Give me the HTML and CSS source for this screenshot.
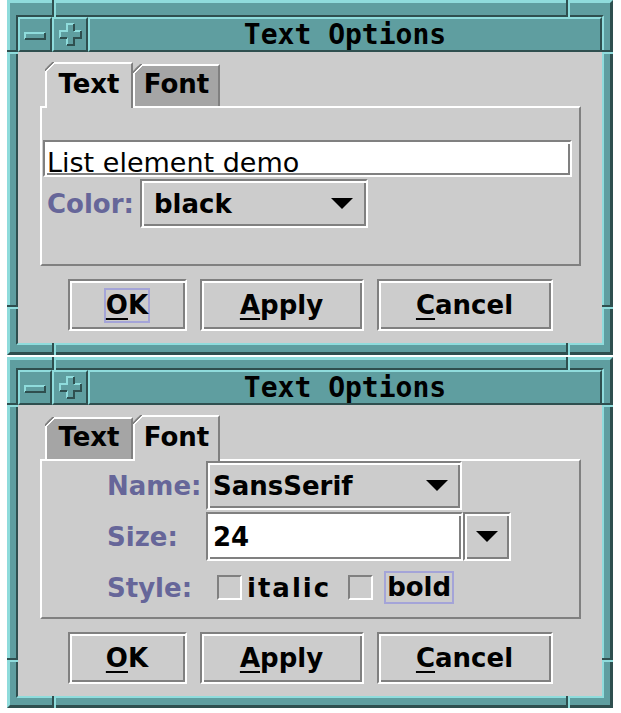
FILE: index.html
```html
<!DOCTYPE html>
<html>
<head>
<meta charset="utf-8">
<title>Text Options</title>
<link rel="stylesheet" href="styles.css">
</head>
<body>
<div class="window win1">
  <span class="tick tick-top tick-x1"></span>
  <span class="tick tick-top tick-x2"></span>
  <span class="tick tick-bottom tick-x1"></span>
  <span class="tick tick-bottom tick-x2"></span>
  <span class="tick tick-left tick-y1"></span>
  <span class="tick tick-left tick-y2"></span>
  <span class="tick tick-right tick-y1"></span>
  <span class="tick tick-right tick-y2"></span>
  <div class="inner">
    <div class="titlebar">
      <div class="tb tb-menu">
        <svg class="ic-minus" width="22" height="8" viewBox="0 0 22 8"><rect x="1" y="1" width="20" height="6" fill="#5f9ea0"/><path d="M1 7V1H21" stroke="#8fdcdc" stroke-width="2" fill="none"/><path d="M21 1V7H1" stroke="#2f4f4f" stroke-width="2" fill="none"/></svg>
      </div>
      <div class="tb tb-plus">
        <svg width="23" height="23" viewBox="-1 -1 23 23"><polygon points="7,0 14,0 14,7 21,7 21,14 14,14 14,21 7,21 7,14 0,14 0,7 7,7" fill="#5f9ea0"/><path d="M7 21V14M0 14V7H7V0H14M14 7H21" stroke="#8fdcdc" stroke-width="2" fill="none"/><path d="M14 0V7M21 7V14H14V21H7M7 14H0" stroke="#2f4f4f" stroke-width="2" fill="none"/></svg>
      </div>
      <div class="tb tb-title">Text Options</div>
    </div>
    <div class="client">
      <div class="tabs">
        <div class="tab active">Text</div>
        <div class="tab">Font</div>
      </div>
      <div class="panel panel-text">
        <div class="textfield"><span>List element demo</span></div>
        <div class="row-color">
          <span class="lbl">Color:</span>
          <div class="combo combo-color">
            <span>black</span>
            <svg class="arrow" width="22" height="11" viewBox="0 0 22 11"><polygon points="0,0 22,0 11,11" fill="#000"/></svg>
          </div>
        </div>
      </div>
      <div class="buttons">
        <div class="btn btn-ok"><span class="focus"><span class="mn">O</span>K</span></div>
        <div class="btn btn-apply"><span class="nofocus"><span class="mn">A</span>pply</span></div>
        <div class="btn btn-cancel"><span class="nofocus"><span class="mn">C</span>ancel</span></div>
      </div>
    </div>
  </div>
</div>

<div class="window win2">
  <span class="tick tick-top tick-x1"></span>
  <span class="tick tick-top tick-x2"></span>
  <span class="tick tick-bottom tick-x1"></span>
  <span class="tick tick-bottom tick-x2"></span>
  <span class="tick tick-left tick-y1"></span>
  <span class="tick tick-left tick-y2"></span>
  <span class="tick tick-right tick-y1"></span>
  <span class="tick tick-right tick-y2"></span>
  <div class="inner">
    <div class="titlebar">
      <div class="tb tb-menu">
        <svg class="ic-minus" width="22" height="8" viewBox="0 0 22 8"><rect x="1" y="1" width="20" height="6" fill="#5f9ea0"/><path d="M1 7V1H21" stroke="#8fdcdc" stroke-width="2" fill="none"/><path d="M21 1V7H1" stroke="#2f4f4f" stroke-width="2" fill="none"/></svg>
      </div>
      <div class="tb tb-plus">
        <svg width="23" height="23" viewBox="-1 -1 23 23"><polygon points="7,0 14,0 14,7 21,7 21,14 14,14 14,21 7,21 7,14 0,14 0,7 7,7" fill="#5f9ea0"/><path d="M7 21V14M0 14V7H7V0H14M14 7H21" stroke="#8fdcdc" stroke-width="2" fill="none"/><path d="M14 0V7M21 7V14H14V21H7M7 14H0" stroke="#2f4f4f" stroke-width="2" fill="none"/></svg>
      </div>
      <div class="tb tb-title">Text Options</div>
    </div>
    <div class="client">
      <div class="tabs">
        <div class="tab">Text</div>
        <div class="tab active">Font</div>
      </div>
      <div class="panel panel-font">
        <div class="fontgrid">
          <span class="lbl glbl">Name:</span>
          <div class="combo combo-name">
            <span>SansSerif</span>
            <svg class="arrow" width="22" height="11" viewBox="0 0 22 11"><polygon points="0,0 22,0 11,11" fill="#000"/></svg>
          </div>
          <span class="lbl glbl">Size:</span>
          <div class="sizecombo">
            <div class="sizefield">24</div>
            <div class="sizebtn"><svg class="arrow" width="22" height="11" viewBox="0 0 22 11"><polygon points="0,0 22,0 11,11" fill="#000"/></svg></div>
          </div>
          <span class="lbl glbl r3">Style:</span>
          <div class="stylerow r3">
            <span class="cb"></span>
            <span class="opt opt-italic">italic</span>
            <span class="cb cb2"></span>
            <span class="opt opt-bold">bold</span>
          </div>
        </div>
      </div>
      <div class="buttons">
        <div class="btn btn-ok"><span class="nofocus"><span class="mn">O</span>K</span></div>
        <div class="btn btn-apply"><span class="nofocus"><span class="mn">A</span>pply</span></div>
        <div class="btn btn-cancel"><span class="nofocus"><span class="mn">C</span>ancel</span></div>
      </div>
    </div>
  </div>
</div>
</body>
</html>
```

FILE: styles.css
```css
* { box-sizing: border-box; }

html, body {
  margin: 0;
  background: #ffffff;
}

body {
  padding: 0 0 0 7px;
  font-family: "DejaVu Sans", "Noto Sans", sans-serif;
  color: #000;
}

/* ---------- window frame ---------- */
.window {
  --ft: 8px;
  position: relative;
  width: 606px;
  margin-bottom: 2px;
  background: #5f9ea0;
  border: 3px solid;
  border-color: #8fdcdc #2f4f4f #2f4f4f #8fdcdc;
  padding: var(--ft) 6px 7px 6px;
}

.win1 { --ft: 12px; }

.tick {
  position: absolute;
  background: #2f4f4f;
}
.tick-top, .tick-bottom { width: 2px; box-shadow: 2px 0 0 #8fdcdc; }
.tick-top { top: -3px; height: calc(var(--ft) + 5px); }
.tick-bottom { bottom: -3px; height: 12px; }
.tick-x1 { left: 42px; }
.tick-x2 { left: 556px; }
.tick-left, .tick-right { height: 2px; box-shadow: 0 2px 0 #8fdcdc; }
.tick-left { left: -3px; width: 11px; }
.tick-right { right: -3px; width: 11px; }
.tick-y1 { top: calc(var(--ft) + 35px); }
.tick-y2 { bottom: 45px; }

.inner {
  border: 2px solid;
  border-color: #2f4f4f #8fdcdc #8fdcdc #2f4f4f;
}

/* ---------- title bar ---------- */
.titlebar {
  display: flex;
  height: 35px;
}

.tb {
  display: flex;
  align-items: center;
  justify-content: center;
  background: #5f9ea0;
  border: 2px solid;
  border-color: #8fdcdc #2f4f4f #2f4f4f #8fdcdc;
}

.tb-menu { width: 34px; }
.tb-plus { width: 36px; }
.ic-minus { margin-top: 3px; }

.tb-title {
  flex: 1;
  font-family: "DejaVu Sans Mono", "Liberation Mono", monospace;
  font-weight: bold;
  font-size: 28px;
  color: #000;
}

/* ---------- client area ---------- */
.client {
  height: 291px;
  background: #cccccc;
  padding-top: 10px;
}

.tabs {
  position: relative;
  z-index: 1;
  display: flex;
  align-items: flex-end;
  height: 44px;
  padding-left: 27px;
}

.tab {
  position: relative;
  width: 88px;
  height: 42px;
  padding-bottom: 5px;
  display: flex;
  align-items: center;
  justify-content: center;
  background: #a5a5a5;
  border-top: 2px solid #ffffff;
  border-left: 2px solid #ffffff;
  border-right: 2px solid #808080;
  font-weight: bold;
  font-size: 26px;
  clip-path: polygon(7px 0, 100% 0, 100% 100%, 0 100%, 0 7px);
}

.tab + .tab { width: 87px; }

.tab::before {
  content: "";
  position: absolute;
  left: -2px;
  top: -2px;
  width: 9px;
  height: 9px;
  background: linear-gradient(to bottom right, transparent 38%, #808080 38%, #808080 55%, #ffffff 55%, #ffffff 66%, transparent 66%);
}

.tab.active {
  height: 46px;
  margin-bottom: -2px;
  background: #cccccc;
}

.panel {
  margin-left: 22px;
  width: 541px;
  height: 160px;
  border: 2px solid;
  border-color: #ffffff #808080 #808080 #ffffff;
}

.textfield,
.combo,
.sizefield,
.sizebtn,
.btn {
  border: 2px solid;
  border-color: #808080 #ffffff #ffffff #808080;
  box-shadow: inset 2px 2px 0 #ffffff, inset -2px -2px 0 #808080;
}

/* Text panel */
.panel-text {
  padding: 32px 0 0 1px;
}

.textfield {
  display: flex;
  align-items: flex-end;
  width: 529px;
  height: 37px;
  background: #ffffff;
  padding: 0 2px 0 2px;
  font-size: 27px;
  line-height: 24px;
  white-space: nowrap;
}

.row-color {
  display: flex;
  align-items: center;
  gap: 6px;
  margin-top: 2px;
  padding-left: 4px;
}

.lbl {
  font-weight: bold;
  font-size: 26px;
  color: #666699;
}

.combo {
  display: flex;
  align-items: center;
  justify-content: space-between;
  height: 49px;
  background: #cccccc;
  font-weight: bold;
  font-size: 26px;
}

.combo-color {
  width: 228px;
  padding: 0 13px 0 12px;
}

.combo-name {
  width: 256px;
  padding: 0 12px 0 5px;
}

.arrow { display: block; flex: none; }

/* Font panel */
.fontgrid {
  display: grid;
  grid-template-columns: 99px 305px;
  grid-template-rows: 49px 49px 41px;
  row-gap: 2px;
  margin-left: 65px;
}

.glbl {
  display: flex;
  align-items: center;
}

.r3 { margin-top: 8px; }

.sizecombo {
  display: flex;
  width: 305px;
  height: 49px;
}

.sizefield {
  flex: 1;
  display: flex;
  align-items: center;
  padding-left: 5px;
  background: #ffffff;
  font-weight: bold;
  font-size: 26px;
}

.sizebtn {
  width: 48px;
  display: flex;
  align-items: center;
  justify-content: center;
  background: #cccccc;
}

.stylerow {
  display: flex;
  align-items: center;
  height: 33px;
}

.cb {
  width: 25px;
  height: 25px;
  margin-left: 11px;
  border: 2px solid;
  border-color: #808080 #ffffff #ffffff #808080;
}

.cb2 { margin-left: 17px; }

.opt {
  font-weight: bold;
  font-size: 26px;
}

.opt-italic {
  margin-left: 5px;
  letter-spacing: 2px;
}

.opt-bold {
  margin-left: 11px;
  height: 33px;
  line-height: 29px;
  padding: 0 1px;
  border: 2px solid #a4a4d8;
}

/* Buttons */
.buttons {
  display: flex;
  justify-content: center;
  gap: 13px;
  margin-top: 13px;
}

.btn {
  height: 52px;
  display: flex;
  align-items: center;
  justify-content: center;
  font-weight: bold;
  font-size: 26px;
}

.btn-ok { width: 119px; }
.btn-apply { width: 164px; }
.btn-cancel { width: 176px; }

.focus,
.nofocus {
  display: block;
  line-height: 31px;
  border: 2px solid transparent;
}

.focus { border-color: #a4a4d8; }

.mn {
  text-decoration: underline;
  text-decoration-thickness: 2px;
  text-underline-offset: 4px;
}
```
